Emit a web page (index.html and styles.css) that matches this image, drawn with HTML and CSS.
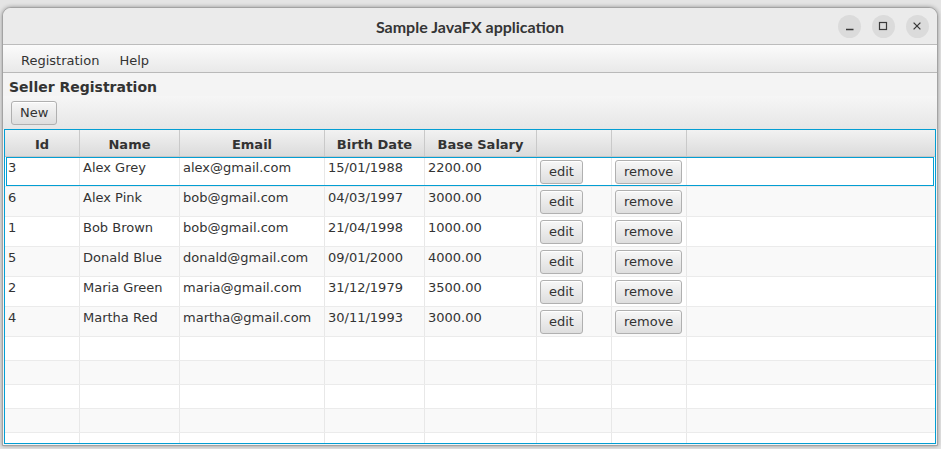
FILE: index.html
```html
<!DOCTYPE html>
<html>
<head>
<meta charset="utf-8">
<link rel="stylesheet" href="styles.css">
</head>
<body>
<div class="window">
  <div class="titlebar">
    <div></div>
    <div class="title">Sample JavaFX application</div>
    <div class="controls">
      <span class="ctl"><svg width="23" height="23" viewBox="0 0 23 23"><path d="M8 14.5H15.5" stroke="#3a3a3a" stroke-width="1.3" fill="none"/></svg></span>
      <span class="ctl"><svg width="23" height="23" viewBox="0 0 23 23"><rect x="7.5" y="7.5" width="7" height="7" stroke="#3a3a3a" stroke-width="1.2" fill="none"/></svg></span>
      <span class="ctl"><svg width="23" height="23" viewBox="0 0 23 23"><path d="M7.6 7.6L14.4 14.4M14.4 7.6L7.6 14.4" stroke="#3a3a3a" stroke-width="1.3" fill="none"/></svg></span>
    </div>
  </div>
  <div class="menubar"><span class="menu">Registration</span><span class="menu">Help</span></div>
  <div class="heading">Seller Registration</div>
  <div class="toolbar"><button class="btn">New</button></div>
  <div class="table">
    <div class="row head">
      <div class="cell">Id</div><div class="cell">Name</div><div class="cell">Email</div><div class="cell">Birth Date</div><div class="cell">Base Salary</div><div class="cell"></div><div class="cell"></div><div class="cell last"></div>
    </div>
    <div class="body">
      <div class="row data focused">
        <div class="cell">3</div><div class="cell">Alex Grey</div><div class="cell">alex@gmail.com</div><div class="cell">15/01/1988</div><div class="cell">2200.00</div><div class="cell btncell"><button class="btn">edit</button></div><div class="cell btncell"><button class="btn">remove</button></div><div class="cell last"></div>
      </div>
      <div class="row data odd">
        <div class="cell">6</div><div class="cell">Alex Pink</div><div class="cell">bob@gmail.com</div><div class="cell">04/03/1997</div><div class="cell">3000.00</div><div class="cell btncell"><button class="btn">edit</button></div><div class="cell btncell"><button class="btn">remove</button></div><div class="cell last"></div>
      </div>
      <div class="row data">
        <div class="cell">1</div><div class="cell">Bob Brown</div><div class="cell">bob@gmail.com</div><div class="cell">21/04/1998</div><div class="cell">1000.00</div><div class="cell btncell"><button class="btn">edit</button></div><div class="cell btncell"><button class="btn">remove</button></div><div class="cell last"></div>
      </div>
      <div class="row data odd">
        <div class="cell">5</div><div class="cell">Donald Blue</div><div class="cell">donald@gmail.com</div><div class="cell">09/01/2000</div><div class="cell">4000.00</div><div class="cell btncell"><button class="btn">edit</button></div><div class="cell btncell"><button class="btn">remove</button></div><div class="cell last"></div>
      </div>
      <div class="row data">
        <div class="cell">2</div><div class="cell">Maria Green</div><div class="cell">maria@gmail.com</div><div class="cell">31/12/1979</div><div class="cell">3500.00</div><div class="cell btncell"><button class="btn">edit</button></div><div class="cell btncell"><button class="btn">remove</button></div><div class="cell last"></div>
      </div>
      <div class="row data odd">
        <div class="cell">4</div><div class="cell">Martha Red</div><div class="cell">martha@gmail.com</div><div class="cell">30/11/1993</div><div class="cell">3000.00</div><div class="cell btncell"><button class="btn">edit</button></div><div class="cell btncell"><button class="btn">remove</button></div><div class="cell last"></div>
      </div>
      <div class="row empty"><div class="cell"></div><div class="cell"></div><div class="cell"></div><div class="cell"></div><div class="cell"></div><div class="cell"></div><div class="cell"></div><div class="cell last"></div></div>
      <div class="row empty odd"><div class="cell"></div><div class="cell"></div><div class="cell"></div><div class="cell"></div><div class="cell"></div><div class="cell"></div><div class="cell"></div><div class="cell last"></div></div>
      <div class="row empty"><div class="cell"></div><div class="cell"></div><div class="cell"></div><div class="cell"></div><div class="cell"></div><div class="cell"></div><div class="cell"></div><div class="cell last"></div></div>
      <div class="row empty odd"><div class="cell"></div><div class="cell"></div><div class="cell"></div><div class="cell"></div><div class="cell"></div><div class="cell"></div><div class="cell"></div><div class="cell last"></div></div>
      <div class="row empty"><div class="cell"></div><div class="cell"></div><div class="cell"></div><div class="cell"></div><div class="cell"></div><div class="cell"></div><div class="cell"></div><div class="cell last"></div></div>
    </div>
  </div>
</div>
</body>
</html>
```
FILE: styles.css
```css
html, body {
  margin: 0;
  padding: 0;
}
body {
  width: 941px;
  height: 449px;
  background: #e4e4e4;
  overflow: hidden;
  font-family: "DejaVu Sans", sans-serif;
  font-size: 13px;
  color: #333333;
}
.window {
  box-sizing: border-box;
  margin: 7px 0 0 2px;
  width: 936px;
  height: 439px;
  border: 1px solid #a3a3a3;
  border-radius: 9px 9px 0 0;
  background: #f4f4f4;
  box-shadow: 0 0 4px rgba(0,0,0,0.35);
  display: flex;
  flex-direction: column;
  overflow: hidden;
}
.titlebar {
  height: 36px;
  flex: none;
  background: #ebebeb;
  border-bottom: 1px solid #bcbcbc;
  display: grid;
  grid-template-columns: 1fr auto 1fr;
  align-items: center;
  border-radius: 8px 8px 0 0;
}
.title {
  font-family: "Lato", "DejaVu Sans", sans-serif;
  font-weight: bold;
  font-size: 16px;
  color: #353535;
  padding-top: 1px;
}
.controls {
  justify-self: end;
  display: flex;
  gap: 11px;
  padding-right: 8px;
  padding-top: 1px;
}
.ctl {
  width: 23px;
  height: 23px;
  border-radius: 50%;
  background: #dbdbdb;
  display: block;
}
.ctl svg { display: block; }
.menubar {
  height: 27px;
  flex: none;
  box-sizing: content-box;
  background: linear-gradient(#fbfbfb, #e9e9e9);
  border-bottom: 1px solid #b9b9b9;
  padding-left: 8px;
  display: flex;
}
.menu {
  padding: 8px 10px 0;
  line-height: 16px;
}
.heading {
  height: 23px;
  flex: none;
  box-sizing: border-box;
  padding: 6px 0 0 6px;
  font-weight: bold;
  font-size: 14px;
  line-height: 17px;
  background: #f4f4f4;
}
.toolbar {
  height: 33px;
  flex: none;
  box-sizing: border-box;
  padding: 5px 8px 0;
  background: linear-gradient(#f6f6f6, #e6e6e6);
  display: flex;
  align-items: flex-start;
}
.btn {
  font-family: "DejaVu Sans", sans-serif;
  font-size: 13px;
  line-height: 16px;
  color: #333333;
  height: 24px;
  box-sizing: border-box;
  padding: 3px 8px;
  margin: 0;
  border: 1px solid #b0b0b0;
  border-radius: 3px;
  background: linear-gradient(#f7f7f7, #dedede);
  box-shadow: inset 0 1px 0 #ffffff;
}
.table {
  flex: none;
  box-sizing: border-box;
  height: 315px;
  margin: 0 1px;
  border: 1px solid #039ed3;
  background: #ffffff;
  overflow: hidden;
  display: flex;
  flex-direction: column;
}
.row {
  display: grid;
  grid-template-columns: 75px 100px 145px 100px 112px 75px 75px 1fr;
  flex: none;
  box-sizing: border-box;
  position: relative;
}
.cell {
  box-sizing: border-box;
  border-right: 1px solid #e8e8e8;
  white-space: nowrap;
  overflow: hidden;
}
.cell.last { border-right: none; }
.head {
  height: 27px;
  background: linear-gradient(#f2f2f2, #dbdbdb);
  border-bottom: 1px solid #c6c6c6;
}
.head .cell {
  border-right: 1px solid #c9c9c9;
  text-align: center;
  font-weight: bold;
  line-height: 16px;
  padding-top: 7px;
}
.head .cell.last { border-right: none; }
.body {
  display: flex;
  flex-direction: column;
}
.data {
  height: 30px;
  border-bottom: 1px solid #ebebeb;
  background: #ffffff;
}
.empty {
  height: 24px;
  border-bottom: 1px solid #ebebeb;
  background: #ffffff;
}
.odd { background: #f9f9f9; }
.data .cell {
  padding: 3px 0 0 3px;
  line-height: 16px;
}
.data .btncell {
  padding: 3px 0 0 3px;
}
.focused::after {
  content: "";
  position: absolute;
  left: 1px;
  right: 1px;
  top: 0;
  bottom: 0;
  border: 1px solid #039ed3;
  pointer-events: none;
}
```
